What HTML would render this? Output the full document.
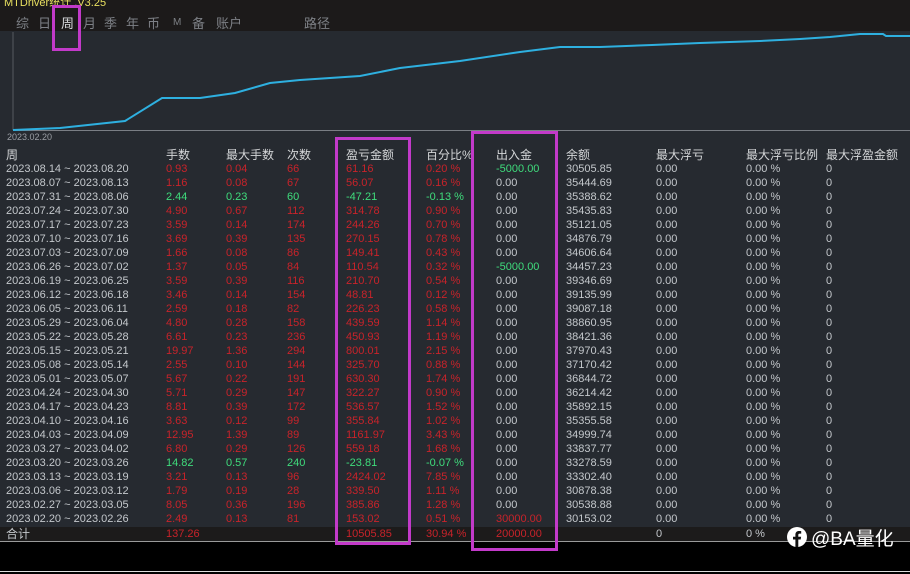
<!DOCTYPE html>
<html><head><meta charset="utf-8"><style>
*{margin:0;padding:0;box-sizing:border-box}
body{width:910px;height:574px;overflow:hidden;background:#000;font-family:"Liberation Sans","Noto Sans CJK SC",sans-serif;position:relative}
.abs{position:absolute}
#tabs{left:0;top:0;width:910px;height:31px;background:#1c1a1a}
#chart{left:0;top:31px;width:910px;height:496px;background:#262a30}
.tab{position:absolute;top:13px;font-size:13px;color:#7d8086}
.r{position:absolute;left:0;width:910px;height:14px;font-size:11px;line-height:14px;color:#c4c8cc;white-space:nowrap}
.r span{position:absolute;top:0}
.c1{left:6px}.c2{left:166px}.c3{left:226px}.c4{left:287px}.c5{left:346px}.c6{left:426px}.c7{left:496px}.c8{left:566px}.c9{left:656px}.c10{left:746px}.c11{left:826px}
.red{color:#c8232a}.grn{color:#3fdc7c}
.hd{font-size:12px;color:#d4d6d8}
.box{position:absolute;border:3px solid #c23ac9}
</style></head><body>
<div class="abs" id="tabs"></div>
<div class="abs" style="left:4px;top:-6px;font-size:11px;color:#e8e060">MTDriver统计 ,V3.25</div>
<div class="tab" style="left:16px">综</div>
<div class="tab" style="left:38px">日</div>
<div class="tab" style="left:61px;color:#d8dadc">周</div>
<div class="tab" style="left:83px">月</div>
<div class="tab" style="left:104px">季</div>
<div class="tab" style="left:126px">年</div>
<div class="tab" style="left:147px">币</div>
<div class="tab" style="left:173px;font-size:10px;top:17px">M</div>
<div class="tab" style="left:192px">备</div>
<div class="tab" style="left:216px">账户</div>
<div class="tab" style="left:304px">路径</div>
<div class="abs" id="chart"></div>
<svg class="abs" style="left:0;top:0" width="910" height="140">
<line x1="13" y1="32" x2="13" y2="130" stroke="#555a60" stroke-width="1"/>
<line x1="13" y1="130.5" x2="910" y2="130.5" stroke="#7a7e84" stroke-width="1"/>
<polyline fill="none" stroke="#2eb0e0" stroke-width="2" points="13,130 60,128 125,121 162,98 200,98 235,93 270,83 300,80 360,76 400,68 460,61 520,52 560,47 600,47 652,45 700,43 760,41 800,39 830,37 860,34 883,34 886,36 910,36"/>
</svg>
<div class="abs" style="left:7px;top:132px;font-size:9px;color:#9a9ea4">2023.02.20</div>
<div class="r hd" style="top:148px"><span class="c1">周</span><span class="c2">手数</span><span class="c3">最大手数</span><span class="c4">次数</span><span class="c5">盈亏金额</span><span class="c6">百分比%</span><span class="c7">出入金</span><span class="c8">余额</span><span class="c9">最大浮亏</span><span class="c10">最大浮亏比例</span><span class="c11">最大浮盈金额</span></div>

<div class="r" style="top:162px"><span class="c1">2023.08.14 ~ 2023.08.20</span><span class="c2 red">0.93</span><span class="c3 red">0.04</span><span class="c4 red">66</span><span class="c5 red">61.16</span><span class="c6 red">0.20 %</span><span class="c7 grn">-5000.00</span><span class="c8">30505.85</span><span class="c9">0.00</span><span class="c10">0.00 %</span><span class="c11">0</span></div>
<div class="r" style="top:176px"><span class="c1">2023.08.07 ~ 2023.08.13</span><span class="c2 red">1.16</span><span class="c3 red">0.08</span><span class="c4 red">67</span><span class="c5 red">56.07</span><span class="c6 red">0.16 %</span><span class="c7">0.00</span><span class="c8">35444.69</span><span class="c9">0.00</span><span class="c10">0.00 %</span><span class="c11">0</span></div>
<div class="r" style="top:190px"><span class="c1">2023.07.31 ~ 2023.08.06</span><span class="c2 grn">2.44</span><span class="c3 grn">0.23</span><span class="c4 grn">60</span><span class="c5 grn">-47.21</span><span class="c6 grn">-0.13 %</span><span class="c7">0.00</span><span class="c8">35388.62</span><span class="c9">0.00</span><span class="c10">0.00 %</span><span class="c11">0</span></div>
<div class="r" style="top:204px"><span class="c1">2023.07.24 ~ 2023.07.30</span><span class="c2 red">4.90</span><span class="c3 red">0.67</span><span class="c4 red">112</span><span class="c5 red">314.78</span><span class="c6 red">0.90 %</span><span class="c7">0.00</span><span class="c8">35435.83</span><span class="c9">0.00</span><span class="c10">0.00 %</span><span class="c11">0</span></div>
<div class="r" style="top:218px"><span class="c1">2023.07.17 ~ 2023.07.23</span><span class="c2 red">3.59</span><span class="c3 red">0.14</span><span class="c4 red">174</span><span class="c5 red">244.26</span><span class="c6 red">0.70 %</span><span class="c7">0.00</span><span class="c8">35121.05</span><span class="c9">0.00</span><span class="c10">0.00 %</span><span class="c11">0</span></div>
<div class="r" style="top:232px"><span class="c1">2023.07.10 ~ 2023.07.16</span><span class="c2 red">3.69</span><span class="c3 red">0.39</span><span class="c4 red">135</span><span class="c5 red">270.15</span><span class="c6 red">0.78 %</span><span class="c7">0.00</span><span class="c8">34876.79</span><span class="c9">0.00</span><span class="c10">0.00 %</span><span class="c11">0</span></div>
<div class="r" style="top:246px"><span class="c1">2023.07.03 ~ 2023.07.09</span><span class="c2 red">1.66</span><span class="c3 red">0.08</span><span class="c4 red">86</span><span class="c5 red">149.41</span><span class="c6 red">0.43 %</span><span class="c7">0.00</span><span class="c8">34606.64</span><span class="c9">0.00</span><span class="c10">0.00 %</span><span class="c11">0</span></div>
<div class="r" style="top:260px"><span class="c1">2023.06.26 ~ 2023.07.02</span><span class="c2 red">1.37</span><span class="c3 red">0.05</span><span class="c4 red">84</span><span class="c5 red">110.54</span><span class="c6 red">0.32 %</span><span class="c7 grn">-5000.00</span><span class="c8">34457.23</span><span class="c9">0.00</span><span class="c10">0.00 %</span><span class="c11">0</span></div>
<div class="r" style="top:274px"><span class="c1">2023.06.19 ~ 2023.06.25</span><span class="c2 red">3.59</span><span class="c3 red">0.39</span><span class="c4 red">116</span><span class="c5 red">210.70</span><span class="c6 red">0.54 %</span><span class="c7">0.00</span><span class="c8">39346.69</span><span class="c9">0.00</span><span class="c10">0.00 %</span><span class="c11">0</span></div>
<div class="r" style="top:288px"><span class="c1">2023.06.12 ~ 2023.06.18</span><span class="c2 red">3.46</span><span class="c3 red">0.14</span><span class="c4 red">154</span><span class="c5 red">48.81</span><span class="c6 red">0.12 %</span><span class="c7">0.00</span><span class="c8">39135.99</span><span class="c9">0.00</span><span class="c10">0.00 %</span><span class="c11">0</span></div>
<div class="r" style="top:302px"><span class="c1">2023.06.05 ~ 2023.06.11</span><span class="c2 red">2.59</span><span class="c3 red">0.18</span><span class="c4 red">82</span><span class="c5 red">226.23</span><span class="c6 red">0.58 %</span><span class="c7">0.00</span><span class="c8">39087.18</span><span class="c9">0.00</span><span class="c10">0.00 %</span><span class="c11">0</span></div>
<div class="r" style="top:316px"><span class="c1">2023.05.29 ~ 2023.06.04</span><span class="c2 red">4.80</span><span class="c3 red">0.28</span><span class="c4 red">158</span><span class="c5 red">439.59</span><span class="c6 red">1.14 %</span><span class="c7">0.00</span><span class="c8">38860.95</span><span class="c9">0.00</span><span class="c10">0.00 %</span><span class="c11">0</span></div>
<div class="r" style="top:330px"><span class="c1">2023.05.22 ~ 2023.05.28</span><span class="c2 red">6.61</span><span class="c3 red">0.23</span><span class="c4 red">236</span><span class="c5 red">450.93</span><span class="c6 red">1.19 %</span><span class="c7">0.00</span><span class="c8">38421.36</span><span class="c9">0.00</span><span class="c10">0.00 %</span><span class="c11">0</span></div>
<div class="r" style="top:344px"><span class="c1">2023.05.15 ~ 2023.05.21</span><span class="c2 red">19.97</span><span class="c3 red">1.36</span><span class="c4 red">294</span><span class="c5 red">800.01</span><span class="c6 red">2.15 %</span><span class="c7">0.00</span><span class="c8">37970.43</span><span class="c9">0.00</span><span class="c10">0.00 %</span><span class="c11">0</span></div>
<div class="r" style="top:358px"><span class="c1">2023.05.08 ~ 2023.05.14</span><span class="c2 red">2.55</span><span class="c3 red">0.10</span><span class="c4 red">144</span><span class="c5 red">325.70</span><span class="c6 red">0.88 %</span><span class="c7">0.00</span><span class="c8">37170.42</span><span class="c9">0.00</span><span class="c10">0.00 %</span><span class="c11">0</span></div>
<div class="r" style="top:372px"><span class="c1">2023.05.01 ~ 2023.05.07</span><span class="c2 red">5.67</span><span class="c3 red">0.22</span><span class="c4 red">191</span><span class="c5 red">630.30</span><span class="c6 red">1.74 %</span><span class="c7">0.00</span><span class="c8">36844.72</span><span class="c9">0.00</span><span class="c10">0.00 %</span><span class="c11">0</span></div>
<div class="r" style="top:386px"><span class="c1">2023.04.24 ~ 2023.04.30</span><span class="c2 red">5.71</span><span class="c3 red">0.29</span><span class="c4 red">147</span><span class="c5 red">322.27</span><span class="c6 red">0.90 %</span><span class="c7">0.00</span><span class="c8">36214.42</span><span class="c9">0.00</span><span class="c10">0.00 %</span><span class="c11">0</span></div>
<div class="r" style="top:400px"><span class="c1">2023.04.17 ~ 2023.04.23</span><span class="c2 red">8.81</span><span class="c3 red">0.39</span><span class="c4 red">172</span><span class="c5 red">536.57</span><span class="c6 red">1.52 %</span><span class="c7">0.00</span><span class="c8">35892.15</span><span class="c9">0.00</span><span class="c10">0.00 %</span><span class="c11">0</span></div>
<div class="r" style="top:414px"><span class="c1">2023.04.10 ~ 2023.04.16</span><span class="c2 red">3.63</span><span class="c3 red">0.12</span><span class="c4 red">99</span><span class="c5 red">355.84</span><span class="c6 red">1.02 %</span><span class="c7">0.00</span><span class="c8">35355.58</span><span class="c9">0.00</span><span class="c10">0.00 %</span><span class="c11">0</span></div>
<div class="r" style="top:428px"><span class="c1">2023.04.03 ~ 2023.04.09</span><span class="c2 red">12.95</span><span class="c3 red">1.39</span><span class="c4 red">89</span><span class="c5 red">1161.97</span><span class="c6 red">3.43 %</span><span class="c7">0.00</span><span class="c8">34999.74</span><span class="c9">0.00</span><span class="c10">0.00 %</span><span class="c11">0</span></div>
<div class="r" style="top:442px"><span class="c1">2023.03.27 ~ 2023.04.02</span><span class="c2 red">6.80</span><span class="c3 red">0.29</span><span class="c4 red">126</span><span class="c5 red">559.18</span><span class="c6 red">1.68 %</span><span class="c7">0.00</span><span class="c8">33837.77</span><span class="c9">0.00</span><span class="c10">0.00 %</span><span class="c11">0</span></div>
<div class="r" style="top:456px"><span class="c1">2023.03.20 ~ 2023.03.26</span><span class="c2 grn">14.82</span><span class="c3 grn">0.57</span><span class="c4 grn">240</span><span class="c5 grn">-23.81</span><span class="c6 grn">-0.07 %</span><span class="c7">0.00</span><span class="c8">33278.59</span><span class="c9">0.00</span><span class="c10">0.00 %</span><span class="c11">0</span></div>
<div class="r" style="top:470px"><span class="c1">2023.03.13 ~ 2023.03.19</span><span class="c2 red">3.21</span><span class="c3 red">0.13</span><span class="c4 red">96</span><span class="c5 red">2424.02</span><span class="c6 red">7.85 %</span><span class="c7">0.00</span><span class="c8">33302.40</span><span class="c9">0.00</span><span class="c10">0.00 %</span><span class="c11">0</span></div>
<div class="r" style="top:484px"><span class="c1">2023.03.06 ~ 2023.03.12</span><span class="c2 red">1.79</span><span class="c3 red">0.19</span><span class="c4 red">28</span><span class="c5 red">339.50</span><span class="c6 red">1.11 %</span><span class="c7">0.00</span><span class="c8">30878.38</span><span class="c9">0.00</span><span class="c10">0.00 %</span><span class="c11">0</span></div>
<div class="r" style="top:498px"><span class="c1">2023.02.27 ~ 2023.03.05</span><span class="c2 red">8.05</span><span class="c3 red">0.36</span><span class="c4 red">196</span><span class="c5 red">385.86</span><span class="c6 red">1.28 %</span><span class="c7">0.00</span><span class="c8">30538.88</span><span class="c9">0.00</span><span class="c10">0.00 %</span><span class="c11">0</span></div>
<div class="r" style="top:512px"><span class="c1">2023.02.20 ~ 2023.02.26</span><span class="c2 red">2.49</span><span class="c3 red">0.13</span><span class="c4 red">81</span><span class="c5 red">153.02</span><span class="c6 red">0.51 %</span><span class="c7 red">30000.00</span><span class="c8">30153.02</span><span class="c9">0.00</span><span class="c10">0.00 %</span><span class="c11">0</span></div>

<div class="abs" style="left:0;top:527px;width:910px;height:14px;background:#1c1b1b"></div>
<div class="abs" style="left:0;top:541px;width:910px;height:1px;background:#9a9a9a"></div>
<div class="r" style="top:527px"><span class="c1" style="font-size:12px">合计</span><span class="c2 red">137.26</span><span class="c5 red">10505.85</span><span class="c6 red">30.94 %</span><span class="c7 red">20000.00</span><span class="c9">0</span><span class="c10">0 %</span></div>

<div class="abs" style="left:0;top:571px;width:910px;height:1px;background:#ddd"></div>

<div class="box" style="left:52px;top:5px;width:29px;height:46px"></div>
<div class="box" style="left:335px;top:137px;width:76px;height:408px"></div>
<div class="box" style="left:471px;top:131px;width:87px;height:420px"></div>

<svg class="abs" style="left:786px;top:526px" width="22" height="22" viewBox="0 0 22 22"><circle cx="11" cy="11" r="10" fill="#fff"/><path d="M12.3 21V13.5h2.4l.4-2.8h-2.8V9c0-.8.3-1.4 1.4-1.4h1.5V5.1c-.3 0-1.2-.1-2.2-.1-2.2 0-3.6 1.3-3.6 3.7v2H7v2.8h2.4V21z" fill="#111"/></svg>
<div class="abs" style="left:811px;top:524px;font-size:19px;color:#fff">@BA量化</div>
</body></html>
